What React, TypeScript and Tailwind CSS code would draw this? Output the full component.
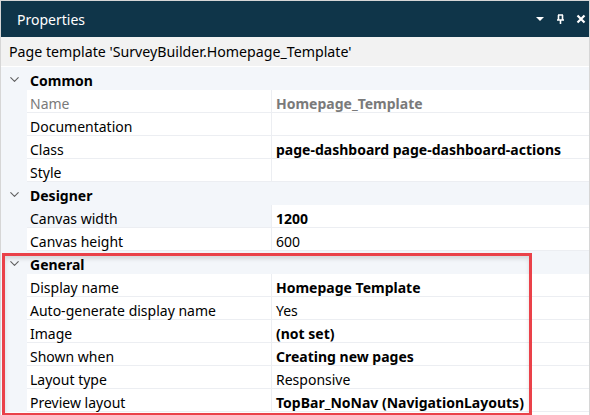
import { ChevronDown } from "lucide-react";

type Row =
  | { kind: "cat"; label: string }
  | { kind: "prop"; label: string; value?: string; bold?: boolean; muted?: boolean; hover?: boolean };

const rows: Row[] = [
  { kind: "cat", label: "Common" },
  { kind: "prop", label: "Name", value: "Homepage_Template", bold: true, muted: true },
  { kind: "prop", label: "Documentation" },
  { kind: "prop", label: "Class", value: "page-dashboard page-dashboard-actions", bold: true },
  { kind: "prop", label: "Style" },
  { kind: "cat", label: "Designer" },
  { kind: "prop", label: "Canvas width", value: "1200", bold: true, hover: true },
  { kind: "prop", label: "Canvas height", value: "600" },
  { kind: "cat", label: "General" },
  { kind: "prop", label: "Display name", value: "Homepage Template", bold: true },
  { kind: "prop", label: "Auto-generate display name", value: "Yes" },
  { kind: "prop", label: "Image", value: "(not set)", bold: true },
  { kind: "prop", label: "Shown when", value: "Creating new pages", bold: true },
  { kind: "prop", label: "Layout type", value: "Responsive" },
  { kind: "prop", label: "Preview layout", value: "TopBar_NoNav (NavigationLayouts)", bold: true },
];

function HeaderIcons() {
  return (
    <div className="flex items-center gap-[11px] pr-[3px]">
      <svg width="10" height="6" viewBox="0 0 10 6">
        <path d="M1 1h8L5 5z" fill="#fff" />
      </svg>
      <svg width="9" height="11" viewBox="0 0 9 11">
        <path d="M2 1h5M2.5 1v5M6.5 1v5M1 6h7M4.5 6v4" stroke="#fff" strokeWidth="1.6" fill="none" />
      </svg>
      <svg width="10" height="10" viewBox="0 0 10 10">
        <path d="M1.5 1.5l7 7M8.5 1.5l-7 7" stroke="#fff" strokeWidth="2.2" />
      </svg>
    </div>
  );
}

export default function App() {
  return (
    <div
      className="relative w-[590px] h-[415px] overflow-hidden bg-white border-x border-t border-[#d6d6d6] text-[14px] text-black"
      style={{ fontFamily: '"Noto Sans", "Open Sans", sans-serif' }}
    >
      <div className="h-[36px] bg-[#0f3549] flex items-center justify-between pl-[16px]">
        <span className="text-white text-[14px] pt-[1px]">Properties</span>
        <HeaderIcons />
      </div>
      <div className="h-[30px] bg-[#f2f2f2] flex items-start pt-[5px] leading-[20px] pl-[8px] text-[14.2px] border-b border-white">
        Page template 'SurveyBuilder.Homepage_Template'
      </div>

      <div className="flex flex-col">
        {rows.map((r) =>
          r.kind === "cat" ? (
            <div key={r.label} className="h-[23px] bg-[#f3f6fa] flex items-start">
              <div className="w-[26px] h-[23px] flex items-center justify-center pt-[1px]">
                <ChevronDown size={15} strokeWidth={1.75} className="text-[#606060]" />
              </div>
              <span className="pl-[3px] pt-[5px] font-bold leading-[18px]">{r.label}</span>
            </div>
          ) : (
            <div key={r.label} className="h-[23px] grid grid-cols-[26px_245px_1fr]">
              <div className="bg-[#f3f6fa]" />
              <div
                className={`pl-[3px] pt-[5px] leading-[17px] border-b border-r border-[#eceef2] whitespace-nowrap ${
                  r.hover ? "bg-[#f3f6fa]" : ""
                } ${r.muted ? "text-[#7a7a7a]" : ""}`}
              >
                {r.label}
              </div>
              <div
                className={`pl-[4px] pt-[5px] leading-[17px] border-b border-[#eceef2] whitespace-nowrap ${
                  r.bold ? "font-bold" : ""
                } ${r.muted ? "text-[#7a7a7a]" : ""}`}
              >
                {r.value}
              </div>
            </div>
          )
        )}
      </div>

      <div className="absolute left-[1px] top-[252px] w-[530px] h-[163px] border-[3px] border-[#ea4149] shadow-[inset_0_3px_4px_rgba(0,0,0,0.12)] pointer-events-none" />
    </div>
  );
}
